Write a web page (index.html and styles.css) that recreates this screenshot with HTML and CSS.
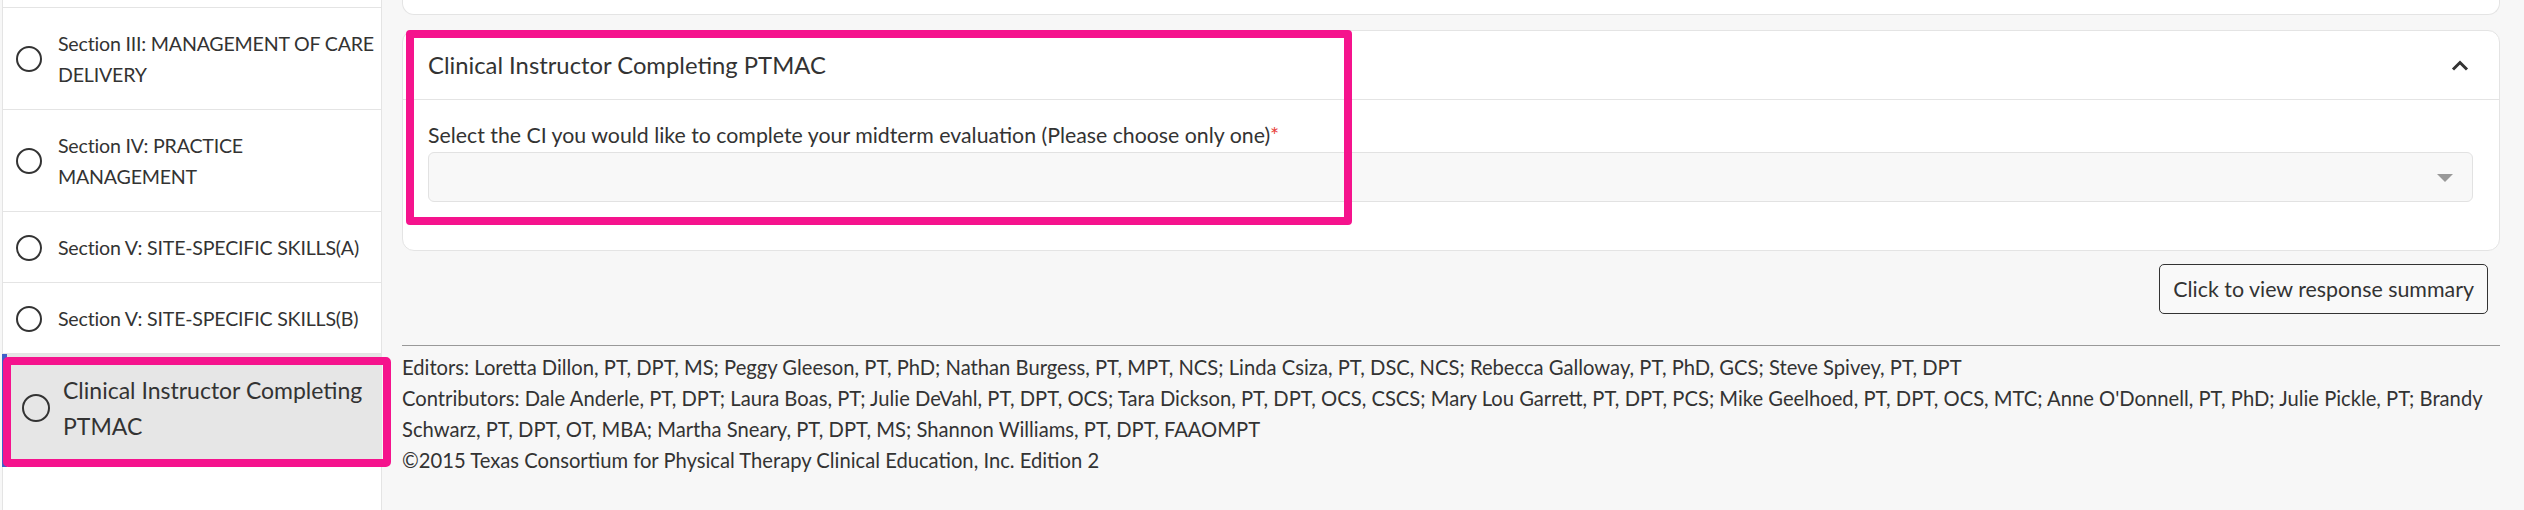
FILE: index.html
```html
<!DOCTYPE html>
<html lang="en">
<head>
<meta charset="UTF-8">
<title>PTMAC Midterm Evaluation</title>
<link rel="stylesheet" href="styles.css">
</head>
<body>

<div class="page">
    <div class="sidebar">
        <div class="item stub"></div>
        <div class="item">
            <span class="radio"></span>
            <span class="item-text">Section III: MANAGEMENT OF CARE DELIVERY</span>
        </div>
        <div class="item">
            <span class="radio"></span>
            <span class="item-text">Section IV: PRACTICE MANAGEMENT</span>
        </div>
        <div class="item">
            <span class="radio"></span>
            <span class="item-text">Section V: SITE-SPECIFIC SKILLS(A)</span>
        </div>
        <div class="item">
            <span class="radio"></span>
            <span class="item-text">Section V: SITE-SPECIFIC SKILLS(B)</span>
        </div>
        <div class="item active">
            <span class="radio"></span>
            <span class="item-text">Clinical Instructor Completing PTMAC</span>
        </div>
    </div>

    <div class="main">
        <div class="content">
            <div class="card-prev"></div>
            <div class="card">
                <div class="card-head">
                    <span class="card-title">Clinical Instructor Completing PTMAC</span>
                    <svg class="chevron" width="18" height="11" viewBox="0 0 18 11">
                        <polyline points="2,9.5 9,2.5 16,9.5" fill="none" stroke="#333" stroke-width="3"/>
                    </svg>
                </div>
                <div class="card-body">
                    <label class="field-label">Select the CI you would like to complete your midterm evaluation (Please choose only one)<span class="req">*</span></label>
                    <div class="select"><span class="caret"></span></div>
                </div>
                <div class="highlight"></div>
            </div>
            <div class="actions">
                <button class="summary-btn">Click to view response summary</button>
            </div>
        </div>

        <div class="footer">
            <div>Editors: Loretta Dillon, PT, DPT, MS; Peggy Gleeson, PT, PhD; Nathan Burgess, PT, MPT, NCS; Linda Csiza, PT, DSC, NCS; Rebecca Galloway, PT, PhD, GCS; Steve Spivey, PT, DPT</div>
            <div>Contributors: Dale Anderle, PT, DPT; Laura Boas, PT; Julie DeVahl, PT, DPT, OCS; Tara Dickson, PT, DPT, OCS, CSCS; Mary Lou Garrett, PT, DPT, PCS; Mike Geelhoed, PT, DPT, OCS, MTC; Anne O'Donnell, PT, PhD; Julie Pickle, PT; Brandy Schwarz, PT, DPT, OT, MBA; Martha Sneary, PT, DPT, MS; Shannon Williams, PT, DPT, FAAOMPT</div>
            <div>&copy;2015 Texas Consortium for Physical Therapy Clinical Education, Inc. Edition 2</div>
        </div>
    </div>
</div>

</body>
</html>
```

FILE: styles.css
```css
body {
    margin: 0;
    background: #f7f7f7;
    font-family: "Lato", sans-serif;
    color: #333;
}
.page {
    display: grid;
    grid-template-columns: 382px 1fr;
    height: 510px;
    overflow: hidden;
}
.sidebar {
    margin-left: 2px;
    background: #fff;
    border-left: 1px solid #e4e4e4;
    border-right: 1px solid #e4e4e4;
}
.item {
    display: flex;
    align-items: center;
    gap: 16px;
    padding: 20px 0 19px 13px;
    border-bottom: 1px solid #e4e4e4;
    font-size: 19.6px;
    line-height: 31px;
    letter-spacing: -0.2px;
}
.item.stub {
    padding: 0;
    height: 7px;
}
.radio {
    flex: none;
    width: 22px;
    height: 22px;
    border: 2px solid #333;
    border-radius: 50%;
}
.item.active {
    position: relative;
    padding: 18px 4px 23px 15px;
    gap: 13px;
    background: #e6e6e6;
    border-bottom: none;
    border-left: 5px solid #3f5fc8;
    margin-left: -1px;
    font-size: 23px;
    line-height: 36px;
    letter-spacing: 0;
}
.item.active .radio {
    width: 24px;
    height: 24px;
}
.item.active::after {
    content: "";
    position: absolute;
    left: -4px;
    right: -10px;
    top: 3px;
    bottom: 0;
    border: 8px solid #f5138d;
    border-radius: 5px;
}
.content {
    padding: 0 24px 0 20px;
}
.card-prev {
    height: 14px;
    background: #fff;
    border: 1px solid #e4e4e4;
    border-top: none;
    border-radius: 0 0 12px 12px;
}
.card {
    position: relative;
    margin-top: 15px;
    background: #fff;
    border: 1px solid #e4e4e4;
    border-radius: 12px;
}
.card-head {
    display: flex;
    justify-content: space-between;
    align-items: center;
    height: 68px;
    padding: 0 30px 0 25px;
    border-bottom: 1px solid #e4e4e4;
}
.card-title {
    font-size: 23.8px;
}
.card-body {
    padding: 20px 26px 48px 25px;
}
.field-label {
    display: block;
    height: 30px;
    margin-bottom: 2px;
    font-size: 21.3px;
    line-height: 30px;
}
.req {
    color: #e8413c;
}
.select {
    position: relative;
    height: 48px;
    background: #f8f8f8;
    border: 1px solid #e2e2e2;
    border-radius: 6px;
}
.caret {
    position: absolute;
    right: 19px;
    top: 21px;
    border-left: 8px solid transparent;
    border-right: 8px solid transparent;
    border-top: 8px solid #999;
}
.highlight {
    position: absolute;
    left: 3px;
    top: -1px;
    width: 930px;
    height: 179px;
    border: 8px solid #f5138d;
    border-radius: 4px;
}
.actions {
    display: flex;
    justify-content: flex-end;
    padding: 13px 12px 0 0;
}
.summary-btn {
    height: 50px;
    padding: 0 13px;
    background: #f9f9f9;
    border: 1px solid #333;
    border-radius: 5px;
    font-family: "Lato", sans-serif;
    font-size: 21.4px;
    color: #333;
}
.footer {
    margin: 31px 24px 0 20px;
    padding-top: 6px;
    border-top: 1px solid #999;
    font-size: 20.2px;
    line-height: 31px;
}
```
